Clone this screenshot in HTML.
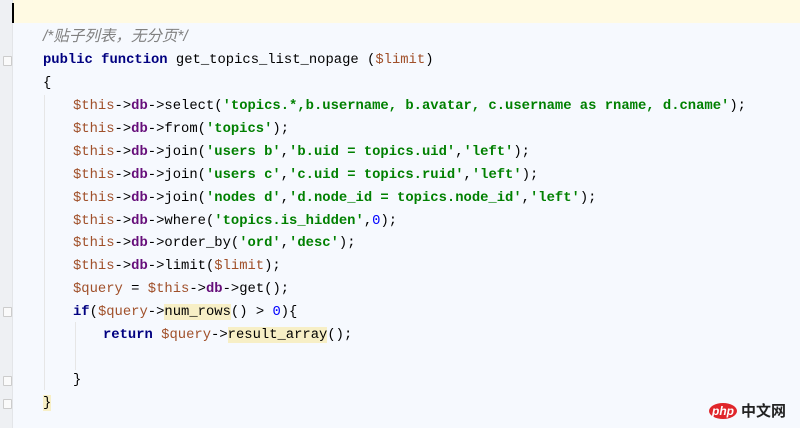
<!DOCTYPE html>
<html><head><meta charset="utf-8"><style>
body{margin:0;width:800px;height:428px;overflow:hidden;background:#f6f9fe;position:relative;font-family:"Liberation Mono","Noto Sans CJK SC",monospace;font-size:13.85px;}
.g{position:absolute;left:0;top:0;width:12px;height:428px;background:#eef0f3;border-right:1px solid #e3e5e8;}
.hl{position:absolute;left:13px;top:0;width:787px;height:23px;background:#fffae3;}
.cur{position:absolute;left:12px;top:3px;width:2px;height:20px;background:#000;}
.l{position:absolute;white-space:pre;line-height:18px;color:#000;}
.k{color:#000080;font-weight:bold}
.v{color:#a0502a}
.d{color:#660e7a;font-weight:bold}
.s{color:#008000;font-weight:bold}
.n{color:#0000ff}
.c{color:#808080;font-style:italic;font-family:"Liberation Sans","Noto Sans CJK SC",sans-serif;font-size:15.5px}
.y{background:#f7efc6}
.guide{position:absolute;width:1px;background:#e6e6e6}
.fold{position:absolute;left:3px;width:7px;height:8px;border:1px solid #ccc;border-radius:1px;background:#fafafa}
</style></head><body>
<div class="g"></div><div class="hl"></div><div class="cur"></div>
<div class="fold" style="top:56px"></div>
<div class="fold" style="top:307px"></div>
<div class="fold" style="top:376px"></div>
<div class="fold" style="top:399px"></div>
<div class="guide" style="left:44px;top:95px;height:295px"></div>
<div class="guide" style="left:75px;top:322px;height:48px"></div>
<div class="l c" style="left:43px;top:28px">/*贴子列表，无分页*/</div>
<div class="l" style="left:43px;top:51px"><span class="k">public function</span> get_topics_list_nopage (<span class="v">$limit</span>)</div>
<div class="l" style="left:43px;top:74px">{</div>
<div class="l" style="left:73px;top:97px"><span class="v">$this</span>-&gt;<span class="d">db</span>-&gt;select(<span class="s">'topics.*,b.username, b.avatar, c.username as rname, d.cname'</span>);</div>
<div class="l" style="left:73px;top:120px"><span class="v">$this</span>-&gt;<span class="d">db</span>-&gt;from(<span class="s">'topics'</span>);</div>
<div class="l" style="left:73px;top:143px"><span class="v">$this</span>-&gt;<span class="d">db</span>-&gt;join(<span class="s">'users b'</span>,<span class="s">'b.uid = topics.uid'</span>,<span class="s">'left'</span>);</div>
<div class="l" style="left:73px;top:166px"><span class="v">$this</span>-&gt;<span class="d">db</span>-&gt;join(<span class="s">'users c'</span>,<span class="s">'c.uid = topics.ruid'</span>,<span class="s">'left'</span>);</div>
<div class="l" style="left:73px;top:189px"><span class="v">$this</span>-&gt;<span class="d">db</span>-&gt;join(<span class="s">'nodes d'</span>,<span class="s">'d.node_id = topics.node_id'</span>,<span class="s">'left'</span>);</div>
<div class="l" style="left:73px;top:212px"><span class="v">$this</span>-&gt;<span class="d">db</span>-&gt;where(<span class="s">'topics.is_hidden'</span>,<span class="n">0</span>);</div>
<div class="l" style="left:73px;top:234px"><span class="v">$this</span>-&gt;<span class="d">db</span>-&gt;order_by(<span class="s">'ord'</span>,<span class="s">'desc'</span>);</div>
<div class="l" style="left:73px;top:257px"><span class="v">$this</span>-&gt;<span class="d">db</span>-&gt;limit(<span class="v">$limit</span>);</div>
<div class="l" style="left:73px;top:280px"><span class="v">$query</span> = <span class="v">$this</span>-&gt;<span class="d">db</span>-&gt;get();</div>
<div class="l" style="left:73px;top:303px"><span class="k">if</span>(<span class="v">$query</span>-&gt;<span class="y">num_rows</span>() &gt; <span class="n">0</span>){</div>
<div class="l" style="left:103px;top:326px"><span class="k">return</span> <span class="v">$query</span>-&gt;<span class="y">result_array</span>();</div>
<div class="l" style="left:73px;top:371px">}</div>
<div class="l" style="left:43px;top:394px"><span class="y">}</span></div>
<div style="position:absolute;left:709px;top:403px;width:28px;height:16px;border-radius:50%;background:#e0262b;color:#fff;font:italic bold 12px 'Liberation Sans',sans-serif;text-align:center;line-height:16px">php</div>
<div style="position:absolute;left:741px;top:402px;font:bold 15px 'Noto Sans CJK SC',sans-serif;color:#222;line-height:18px">中文网</div>
</body></html>
